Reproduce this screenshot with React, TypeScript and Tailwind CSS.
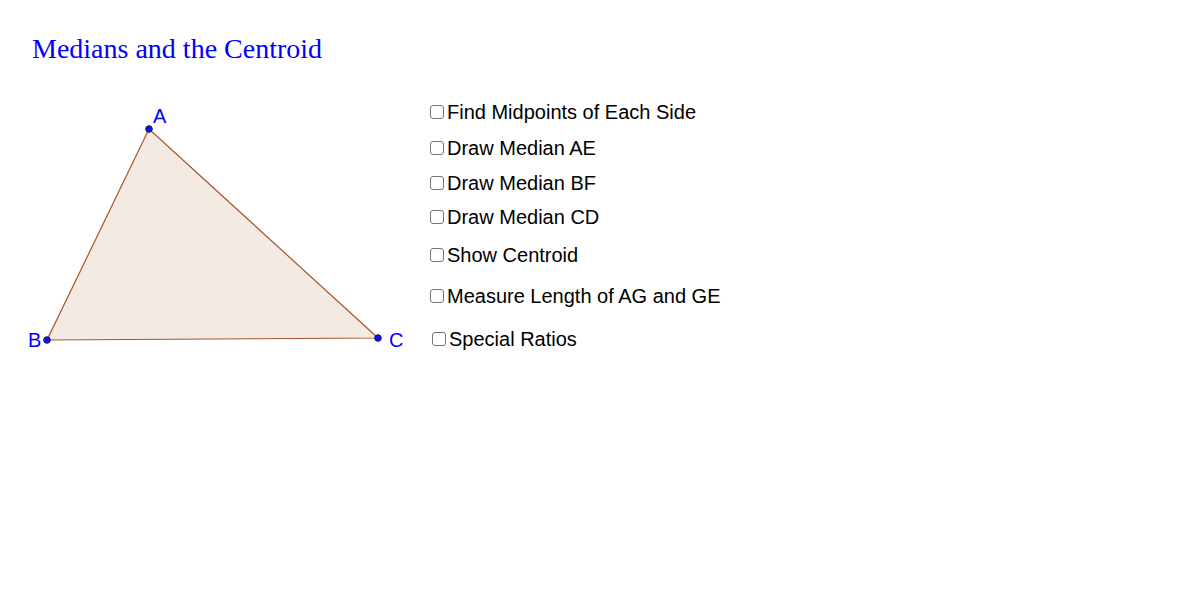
const options = [
  { label: "Find Midpoints of Each Side", row: "mt-[10px] pl-[2px]" },
  { label: "Draw Median AE", row: "mt-[12px] pl-[2px]" },
  { label: "Draw Median BF", row: "mt-[11px] pl-[2px]" },
  { label: "Draw Median CD", row: "mt-[10px] pl-[2px]" },
  { label: "Show Centroid", row: "mt-[14px] pl-[2px]" },
  { label: "Measure Length of AG and GE", row: "mt-[17px] pl-[2px]" },
  { label: "Special Ratios", row: "mt-[19px] pl-[4px]" },
];

const points = [
  { name: "A", x: 149, y: 129, lx: 153, ly: 123 },
  { name: "B", x: 47, y: 340, lx: 28, ly: 347 },
  { name: "C", x: 378, y: 338, lx: 389, ly: 347 },
];

const Triangle = () => {
  return (
    <svg width="428" height="290" viewBox="0 90 428 290" className="shrink-0">
      <polygon
        points="149,129 47,340 378,338"
        fill="#f3eae4"
        stroke="#a8552a"
        strokeWidth="1.2"
      />
      {points.map((p) => (
        <g key={p.name}>
          <circle cx={p.x} cy={p.y} r="3.3" fill="#1010ff" stroke="#1a1a40" strokeWidth="1" />
          <text
            x={p.lx}
            y={p.ly}
            fill="#0000ff"
            fontSize="20"
            fontFamily="'Liberation Sans', Arial, sans-serif"
          >
            {p.name}
          </text>
        </g>
      ))}
    </svg>
  );
};

export default function App() {
  return (
    <div className="h-[600px] w-[1200px] overflow-hidden bg-white">
      <h1 className="pl-[32px] pt-[35px] font-['Liberation_Serif',serif] text-[28px] leading-[28px] text-[#0000ff]">
        Medians and the Centroid
      </h1>
      <div className="mt-[27px] flex">
        <Triangle />
        <div className="flex flex-col font-['Liberation_Sans',Arial,sans-serif] text-[20px] leading-[24px] text-black">
          {options.map((o) => (
            <label key={o.label} className={`flex h-[24px] items-center gap-[3px] ${o.row}`}>
              <span className="h-[14px] w-[14px] rounded-[3px] border border-[#767676] bg-white" />
              <span>{o.label}</span>
            </label>
          ))}
        </div>
      </div>
    </div>
  );
}
